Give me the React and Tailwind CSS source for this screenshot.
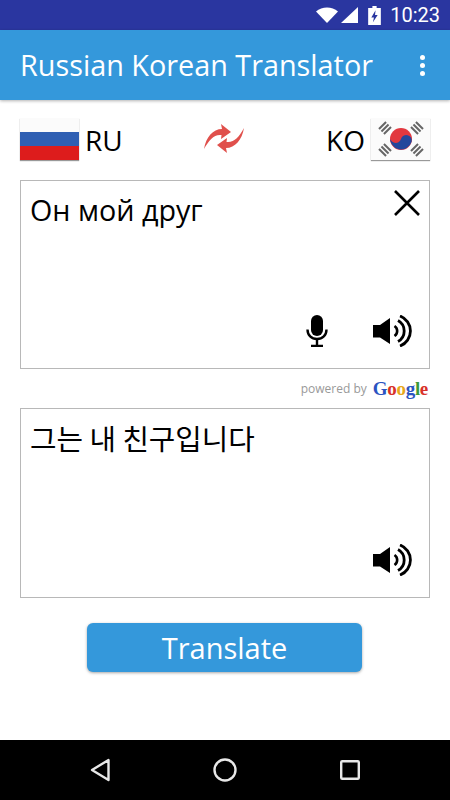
import React from 'react';

const Speaker = () => (
    <svg width="40" height="32" viewBox="0 0 40 32" fill="none">
        <path d="M0 10h7L17 3v26L7 22.500H0z" fill="#000" />
        <path d="M21.500 11a6 6 0 0 1 0 10" stroke="#000" strokeWidth="2.600" />
        <path d="M25 5.500a12 12 0 0 1 0 21" stroke="#000" strokeWidth="2.800" />
        <path d="M27 1a16 16 0 0 1 0 30" stroke="#000" strokeWidth="2.800" />
    </svg>
);

const Mic = () => (
    <svg width="22" height="32" viewBox="1 1 22 32" fill="none">
        <rect x="6" y="1" width="12" height="21" rx="6" fill="#000" />
        <path d="M2.500 15.500c0 5.800 4 9.500 9.500 9.500s9.500-3.700 9.500-9.500" stroke="#000" strokeWidth="2.400" />
        <path d="M12 25v7M6 32h12" stroke="#000" strokeWidth="2.400" />
    </svg>
);

const RussianFlag = () => (
    <div className="w-[59px] h-[42px] flex flex-col shadow-[0_1px_1px_rgba(0,0,0,0.4)]">
        <div className="flex-1 bg-[#fbfbfb]" />
        <div className="flex-1 bg-[#2f5fb3]" />
        <div className="flex-1 bg-[#dd1c1c]" />
    </div>
);

const KoreanFlag = () => (
    <div className="w-[59px] h-[42px] bg-[#fbfbfb] shadow-[0_1px_1px_rgba(0,0,0,0.4)]">
        <svg width="59" height="42" viewBox="0 0 59 42">
            <circle cx="30" cy="21" r="11" fill="#e2383f" />
            <path d="M19.300 18.500a5.500 5.500 0 0 0 10.700 2.500 5.500 5.500 0 0 1 10.700 2.500A11 11 0 0 1 19.300 18.500z" fill="#24479c" />
            <g stroke="#666" strokeWidth="2">
                <path d="M-5 -3.500H5M-5 0H5M-5 3.500H5" transform="translate(14,10) rotate(-45)" />
                <path d="M-5 -3.500H5M-5 0H5M-5 3.500H5" transform="translate(46,10) rotate(45)" />
                <path d="M-5 -3.500H5M-5 0H5M-5 3.500H5" transform="translate(14,32) rotate(45)" />
                <path d="M-5 -3.500H5M-5 0H5M-5 3.500H5" transform="translate(46,32) rotate(-45)" />
            </g>
        </svg>
    </div>
);

const SwapIcon = () => (
    <svg width="42" height="32" viewBox="0 0 42 32" fill="#e0504c">
        <path d="M1 26C3 14 10 6 19 6L18 1l10 8-10 7 .5-4C11 11 6 17 1 26z" />
        <path d="M1 26C3 14 10 6 19 6L18 1l10 8-10 7 .5-4C11 11 6 17 1 26z" transform="rotate(180 21 15.500)" />
    </svg>
);

export default function App() {
    return (
        <div className="w-[450px] h-[800px] flex flex-col bg-white font-['Open_Sans',sans-serif] overflow-hidden">
            {/* Status bar */}
            <div className="h-[30px] bg-[#2a36a0] flex items-center justify-end pr-[10px]">
                <svg width="22" height="16" viewBox="0 0 22 16" fill="#fff">
                    <path d="M0 4.500C6 -1 16 -1 22 4.500L11 16z" />
                </svg>
                <svg width="18" height="16" viewBox="0 0 18 16" fill="#fff" className="ml-[2px]">
                    <path d="M18 0v16H1z" />
                </svg>
                <svg width="13" height="19" viewBox="0 0 12 18" className="ml-[10px]">
                    <path d="M4 0h4v2h4v16H0V2h4z" fill="#fff" />
                    <path d="M7 4L3 11h2.500L4.500 15.500 9 8.500H6.500z" fill="#2a36a0" />
                </svg>
                <span className="text-white text-[20px] font-['Roboto',sans-serif] ml-[9px] leading-none">10:23</span>
            </div>

            {/* Toolbar */}
            <div className="h-[70px] bg-[#3498db] flex items-center justify-between pl-[20px] pr-[25px] shadow-[0_1px_3px_rgba(0,0,0,0.3)]">
                <span className="text-white text-[28.8px] leading-none">Russian Korean Translator</span>
                <div className="flex flex-col gap-[3px]">
                    <div className="w-[5px] h-[5px] rounded-full bg-white" />
                    <div className="w-[5px] h-[5px] rounded-full bg-white" />
                    <div className="w-[5px] h-[5px] rounded-full bg-white" />
                </div>
            </div>

            <div className="flex-1 flex flex-col px-[20px]">
                {/* Language row */}
                <div className="mt-[18px] h-[42px] flex items-center justify-between">
                    <div className="flex items-center gap-[6px]">
                        <RussianFlag />
                        <span className="text-[28px] text-black leading-none pt-[1px]">RU</span>
                    </div>
                    <SwapIcon />
                    <div className="flex items-center gap-[6px]">
                        <span className="text-[28px] text-black leading-none pt-[1px]">KO</span>
                        <KoreanFlag />
                    </div>
                </div>

                {/* Source box */}
                <div className="mt-[20px] h-[189px] border border-[#b8b8b8] flex flex-col justify-between pl-[9px] pr-[16px]">
                    <div className="flex justify-between items-start pt-[10px]">
                        <span className="text-[28.7px] leading-[38px] text-black">Он мой друг</span>
                        <svg width="28" height="28" viewBox="0 0 28 28" className="mr-[-8px] mt-[-2px]" stroke="#000" strokeWidth="2.600">
                            <path d="M2 2l24 24M26 2L2 26" />
                        </svg>
                    </div>
                    <div className="flex justify-end items-center gap-[45px] pb-[21px]">
                        <Mic />
                        <Speaker />
                    </div>
                </div>

                {/* Powered by */}
                <div className="h-[39px] flex items-center justify-end gap-[6px] pr-[2px]">
                    <span className="text-[12px] text-[#999999] leading-none">powered by</span>
                    <span className="text-[19px] font-bold font-['Liberation_Serif',serif] leading-none tracking-[-0.3px]">
                        <span className="text-[#2a53c1]">G</span>
                        <span className="text-[#d8322a]">o</span>
                        <span className="text-[#e8a81c]">o</span>
                        <span className="text-[#2a53c1]">g</span>
                        <span className="text-[#3a9a3a]">l</span>
                        <span className="text-[#d8322a]">e</span>
                    </span>
                </div>

                {/* Target box */}
                <div className="h-[190px] border border-[#b8b8b8] flex flex-col justify-between pl-[9px] pr-[16px]">
                    <span className="pt-[10px] text-[28.8px] leading-[38px] text-black font-['Noto_Sans_CJK_KR',sans-serif]">그는 내 친구입니다</span>
                    <div className="flex justify-end pb-[21px]">
                        <Speaker />
                    </div>
                </div>

                {/* Translate button */}
                <button className="mt-[25px] ml-[67px] w-[275px] h-[49px] rounded-[6px] bg-[#3498db] text-white text-[29px] leading-none shadow-[0_1px_3px_rgba(0,0,0,0.35)]">
                    Translate
                </button>
            </div>

            {/* Nav bar */}
            <div className="h-[60px] bg-black flex items-center justify-between px-[90px]">
                <svg width="20" height="24" viewBox="0 0 20 24" fill="none" stroke="#e8e8e8" strokeWidth="2.400" strokeLinejoin="round">
                    <path d="M18.500 2v20L2 12z" />
                </svg>
                <svg width="24" height="24" viewBox="0 0 24 24" fill="none" stroke="#e8e8e8" strokeWidth="2.400">
                    <circle cx="12" cy="12" r="10.500" />
                </svg>
                <svg width="20" height="20" viewBox="0 0 20 20" fill="none" stroke="#e8e8e8" strokeWidth="2.400" strokeLinejoin="round">
                    <rect x="1.200" y="1.200" width="17.600" height="17.600" rx="1" />
                </svg>
            </div>
        </div>
    );
}
